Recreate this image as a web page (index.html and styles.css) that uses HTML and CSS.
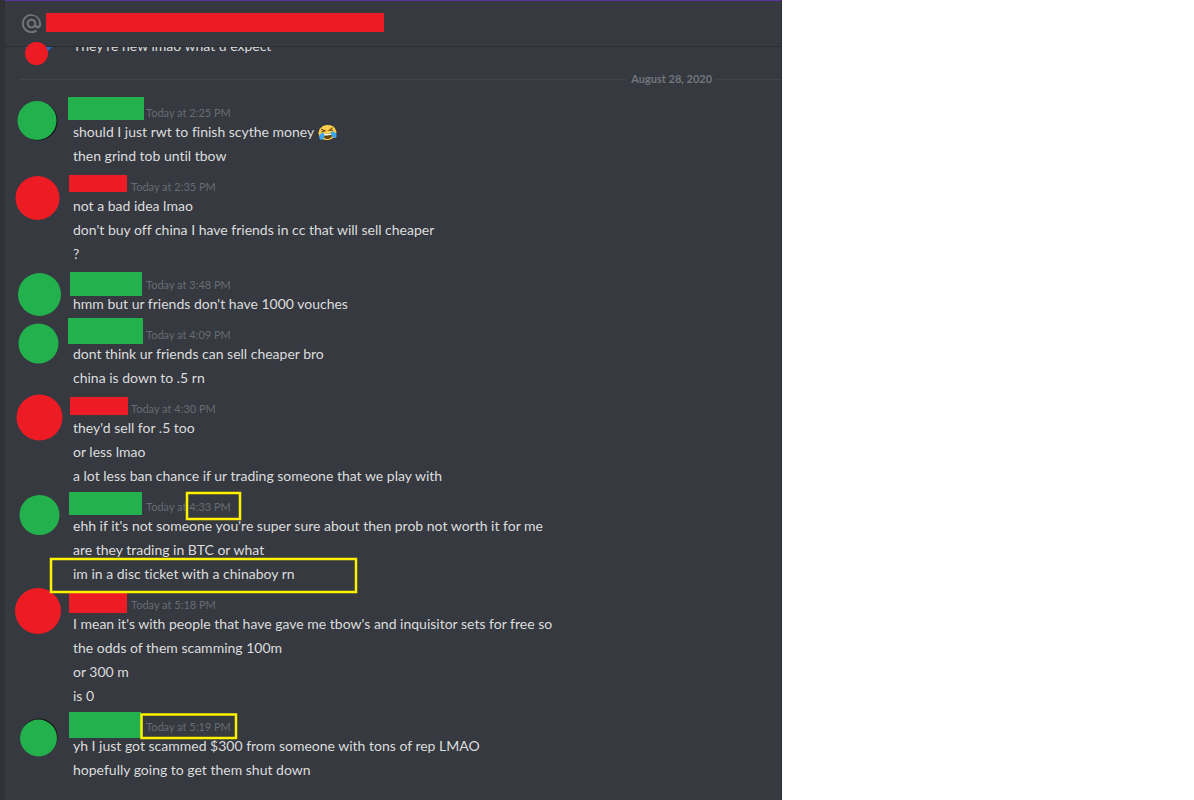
FILE: index.html
```html
<!DOCTYPE html>
<html lang="en">
<head>
  <meta charset="UTF-8">
  <title>Direct Message</title>
  <link rel="stylesheet" href="styles.css">
</head>
<body>
  <main class="chat">
    <header class="chat-header">
      <svg class="at" viewBox="0 0 24 24" aria-hidden="true">
        <path fill="#72767d" d="M12 2C6.486 2 2 6.486 2 12s4.486 10 10 10c2.039 0 3.993-.602 5.652-1.741l-1.131-1.648A7.953 7.953 0 0 1 12 20c-4.411 0-8-3.589-8-8s3.589-8 8-8 8 3.589 8 8v1c0 .827-.673 1.5-1.5 1.500s-1.500-.673-1.500-1.500v-1c0-2.757-2.243-5-5-5s-5 2.243-5 5 2.243 5 5 5c1.450 0 2.748-.631 3.662-1.621.524.944 1.520 1.621 2.838 1.621 1.930 0 3.500-1.570 3.500-3.500v-1c0-5.514-4.486-10-10-10zm0 13c-1.654 0-3-1.346-3-3s1.346-3 3-3 3 1.346 3 3-1.346 3-3 3z"/>
      </svg>
    </header>

    <div class="messages">
      <p class="line cut">They're new lmao what u expect</p>

      <div class="date"><span>August 28, 2020</span></div>

      <article class="group green">
        <time>Today at 2:25 PM</time>
        <p class="line">should I just rwt to finish scythe money
          <svg class="emoji" viewBox="0 0 36 36" role="img" aria-label="joy">
            <g transform="rotate(-8 18 18)">
              <ellipse cx="18" cy="17" rx="18" ry="15" fill="#ffcc4d"/>
              <path fill="#664500" d="M8 18c3 2 17 2 20 0 1 7-4 12-10 12S7 25 8 18z"/>
              <path fill="#fff" d="M10 19c4 1 12 1 16 0v3c-4 1-12 1-16 0z"/>
              <path fill="none" stroke="#664500" stroke-width="2" stroke-linecap="round" d="M7 9l7 4-7 1M29 9l-7 4 7 1"/>
              <path fill="#3aa7ee" d="M2 20c3-4 7-4 9-3 1 5-1 12-6 13-4 0-6-5-3-10zM34 20c-3-4-7-4-9-3-1 5 1 12 6 13 4 0 6-5 3-10z"/>
            </g>
          </svg>
        </p>
        <p class="line">then grind tob until tbow</p>
      </article>

      <article class="group red">
        <time>Today at 2:35 PM</time>
        <p class="line">not a bad idea lmao</p>
        <p class="line">don't buy off china I have friends in cc that will sell cheaper</p>
        <p class="line">?</p>
      </article>

      <article class="group green">
        <time>Today at 3:48 PM</time>
        <p class="line">hmm but ur friends don't have 1000 vouches</p>
      </article>

      <article class="group green">
        <time>Today at 4:09 PM</time>
        <p class="line">dont think ur friends can sell cheaper bro</p>
        <p class="line">china is down to .5 rn</p>
      </article>

      <article class="group red">
        <time>Today at 4:30 PM</time>
        <p class="line">they'd sell for .5 too</p>
        <p class="line">or less lmao</p>
        <p class="line">a lot less ban chance if ur trading someone that we play with</p>
      </article>

      <article class="group green">
        <time>Today at 4:33 PM</time>
        <p class="line">ehh if it's not someone you're super sure about then prob not worth it for me</p>
        <p class="line">are they trading in BTC or what</p>
        <p class="line">im in a disc ticket with a chinaboy rn</p>
      </article>

      <article class="group red">
        <time>Today at 5:18 PM</time>
        <p class="line">I mean it's with people that have gave me tbow's and inquisitor sets for free so</p>
        <p class="line">the odds of them scamming 100m</p>
        <p class="line">or 300 m</p>
        <p class="line">is 0</p>
      </article>

      <article class="group green">
        <time>Today at 5:19 PM</time>
        <p class="line">yh I just got scammed $300 from someone with tons of rep LMAO</p>
        <p class="line">hopefully going to get them shut down</p>
      </article>
    </div>

    <!-- painted over the chat: hidden names and avatars, highlights -->
    <svg class="marks" aria-hidden="true">
      <path fill="#1d6fc4" d="M25 47h27l-6 6H31z"/>
      <g fill="#111">
        <circle cx="38" cy="121" r="19.500"/>
        <circle cx="39" cy="737" r="18.500"/>
      </g>
      <g fill="#ed1c24">
        <rect x="46" y="13" width="338" height="19"/>
        <circle cx="36.500" cy="53.500" r="11.500"/>
        <circle cx="37.500" cy="198" r="22"/>
        <rect x="69" y="175" width="58" height="17"/>
        <circle cx="39.500" cy="417.500" r="23"/>
        <rect x="70" y="397" width="58" height="18"/>
        <circle cx="38" cy="611" r="23"/>
        <rect x="69" y="593" width="58" height="20"/>
      </g>
      <g fill="#22b14c">
        <circle cx="37" cy="120.500" r="19.500"/>
        <rect x="68" y="97" width="76" height="23"/>
        <circle cx="39.500" cy="294.500" r="21.500"/>
        <rect x="70" y="272" width="72" height="24"/>
        <circle cx="38.500" cy="343.500" r="20"/>
        <rect x="68" y="318" width="75" height="26"/>
        <circle cx="39.500" cy="515" r="20"/>
        <rect x="69" y="492" width="73" height="23"/>
        <circle cx="38.500" cy="738" r="18.500"/>
        <rect x="69" y="712" width="72" height="26"/>
      </g>
      <g fill="none" stroke="#fff200" stroke-width="2.500">
        <rect x="187" y="493" width="53" height="26"/>
        <rect x="51" y="559" width="305" height="33"/>
        <rect x="141.500" y="714.500" width="94.500" height="23.500"/>
      </g>
    </svg>
  </main>
</body>
</html>
```
FILE: styles.css
```css
* {
  box-sizing: border-box;
}
body {
  margin: 0;
  background: #fff;
  font-family: Lato, "Noto Sans", sans-serif;
  font-variant-ligatures: none;
}
.chat {
  position: relative;
  width: 65.5%;
  min-height: 100vh;
  background: #36393f;
  border-left: 5px solid #303237;
  border-right: 1px solid #2c2e33;
  overflow: hidden;
}
.chat-header {
  display: flex;
  align-items: center;
  height: 47px;
  padding-left: 15px;
  border-top: 1px solid #5c35a0;
  border-bottom: 1px solid #2c2e32;
}
.at {
  width: 23px;
  height: 23px;
}
.messages {
  overflow: hidden;
}
.line {
  margin: 0;
  padding-left: 68px;
  color: #dcddde;
  font-size: 14px;
  line-height: 24px;
}
.cut {
  margin-top: -13px;
}
.date {
  display: flex;
  align-items: center;
  gap: 5px;
  margin: 13px 0 7px 15px;
  color: #72767d;
  font-size: 11px;
  font-weight: 700;
  line-height: 16px;
}
.date::before,
.date::after {
  content: "";
  height: 1px;
  background: #42454b;
}
.date::before {
  flex: 1;
}
.date::after {
  width: 64px;
}
.group {
  padding-top: 12px;
}
time {
  display: block;
  color: #686c73;
  font-size: 11px;
  line-height: 14px;
}
.green time {
  padding-left: 141px;
}
.red time {
  padding-left: 126px;
}
.emoji {
  width: 21px;
  height: 18px;
  vertical-align: middle;
}
.marks {
  position: absolute;
  top: 0;
  left: -5px;
  width: calc(100% + 6px);
  height: 100%;
  pointer-events: none;
}
```
